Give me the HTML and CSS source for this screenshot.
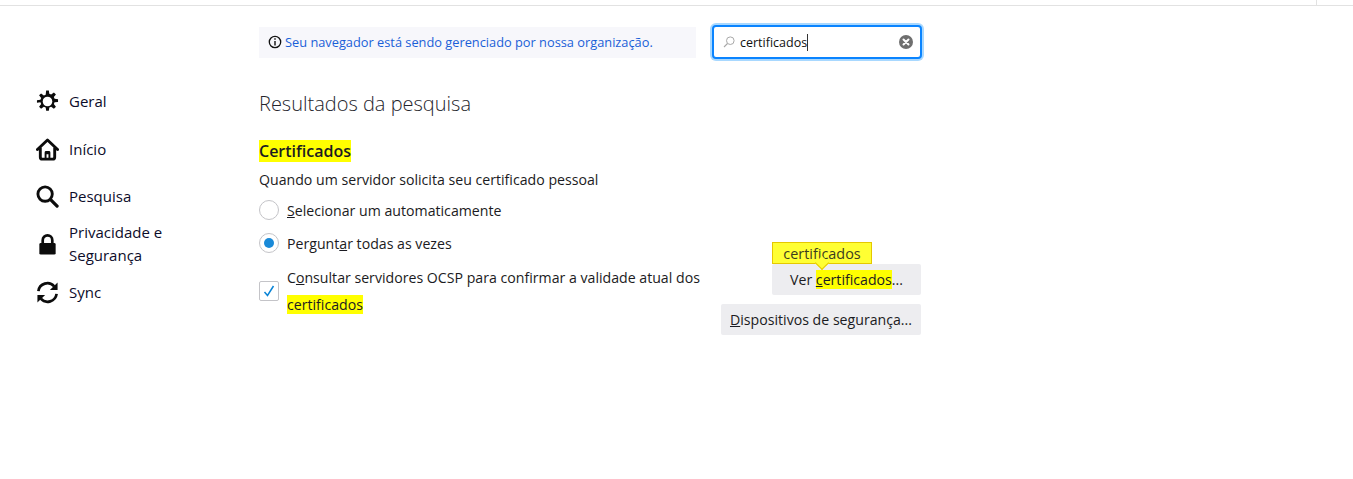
FILE: index.html
```html
<!DOCTYPE html>
<html lang="pt-BR">
<head>
<meta charset="utf-8">
<title>Opções</title>
<link rel="stylesheet" href="styles.css">
</head>
<body>
<div class="topstrip"><span class="strip-tick"></span></div>
<div class="page">
  <nav class="sidebar">
    <a class="nav-item nav-geral">
      <svg class="nav-icon" viewBox="0 0 24 24"><path fill="#0c0c0c" d="M10.6 0h2.8l.5 3.6 1.9.8L18.700 2.200l2.100 2.100-2.200 2.900.8 1.900 3.600.5v2.800l-3.600.5-.8 1.900 2.200 2.900-2.100 2.100-2.900-2.200-1.900.8-.5 3.600h-2.800l-.5-3.600-1.900-.8-2.900 2.200-2.100-2.100 2.200-2.900-.8-1.900L1 13.400v-2.800l3.600-.5.800-1.900-2.200-2.900 2.100-2.100 2.900 2.200 1.900-.8z" transform="translate(0 0.500) scale(1 .96)"/><circle cx="12" cy="12" r="5" fill="#fff"/></svg>
      <span>Geral</span>
    </a>
    <a class="nav-item nav-inicio">
      <svg class="nav-icon" viewBox="0 0 24 24"><path fill="none" stroke="#0c0c0c" stroke-width="3" stroke-linecap="round" stroke-linejoin="round" d="M1.500 12 12 2l10.500 10M4.500 10.500V20a2 2 0 0 0 2 2h11a2 2 0 0 0 2-2v-9.500"/><path fill="#0c0c0c" d="M9 22v-7a1.500 1.500 0 0 1 1.500-1.500h3A1.500 1.500 0 0 1 15 15v7h-2v-5h-2v5z"/></svg>
      <span>Início</span>
    </a>
    <a class="nav-item nav-pesquisa">
      <svg class="nav-icon" viewBox="0 0 24 24"><circle cx="9.500" cy="9.500" r="7.500" fill="none" stroke="#0c0c0c" stroke-width="3"/><path stroke="#0c0c0c" stroke-width="3.400" stroke-linecap="round" d="m15.500 15.500 6.500 6.500"/></svg>
      <span>Pesquisa</span>
    </a>
    <a class="nav-item nav-privacidade">
      <svg class="nav-icon" viewBox="0 0 24 24"><path fill="none" stroke="#0c0c0c" stroke-width="2.800" d="M7 12V7.500a5 5 0 0 1 10 0V12"/><rect x="3.500" y="10.500" width="17" height="12" rx="1.500" fill="#0c0c0c"/></svg>
      <span>Privacidade e<br>Segurança</span>
    </a>
    <a class="nav-item nav-sync">
      <svg class="nav-icon" viewBox="0 0 24 24"><path fill="none" stroke="#0c0c0c" stroke-width="2.800" d="M2.500 10.500A9.500 9.500 0 0 1 19 5.500M21.500 13.500A9.500 9.500 0 0 1 5 18.500"/><path fill="#0c0c0c" d="M22.500 1.500v8h-8zM1.500 22.500v-8h8z"/></svg>
      <span>Sync</span>
    </a>
  </nav>
  <main class="content">
    <div class="top-row">
      <div class="policy">
        <svg class="policy-icon" viewBox="0 0 14 14"><circle cx="7" cy="7" r="5.700" fill="none" stroke="#111" stroke-width="1.300"/><path fill="#111" d="M6.300 6h1.400v4.500H6.300zM6.300 3.300h1.400v1.500H6.300z"/></svg>
        <a class="policy-link">Seu navegador está sendo gerenciado por nossa organização.</a>
      </div>
      <div class="search">
        <svg class="search-icon" viewBox="0 0 12 12"><circle cx="7.300" cy="4.700" r="3.800" fill="none" stroke="#a8a8a8"/><path stroke="#a8a8a8" stroke-width="1.100" d="M4.500 7.500 1 11"/></svg>
        <span class="search-text">certificados</span><span class="caret"></span>
        <svg class="search-clear" viewBox="0 0 14 14"><circle cx="7" cy="7" r="7" fill="#6f6f6f"/><path stroke="#fff" stroke-width="2" stroke-linecap="round" d="m4.500 4.500 5 5m0-5-5 5"/></svg>
      </div>
    </div>
    <h1 class="title">Resultados da pesquisa</h1>
    <h2 class="group-title"><mark class="hl">Certificados</mark></h2>
    <p class="desc">Quando um servidor solicita seu certificado pessoal</p>
    <div class="group">
      <div class="options">
        <label class="radio-row row-auto"><span class="radio"></span><span><u>S</u>elecionar um automaticamente</span></label>
        <label class="radio-row row-ask"><span class="radio radio-on"></span><span>Pergunt<u>a</u>r todas as vezes</span></label>
        <label class="check-row"><span class="check"><svg viewBox="0 0 18 18"><path fill="none" stroke="#0a84d6" stroke-width="1.500" d="m4.500 10 3 3.500 6-9.500"/></svg></span><span class="check-text">C<u>o</u>nsultar servidores OCSP para confirmar a validade atual dos<br><mark class="hl">certificados</mark></span></label>
      </div>
      <div class="buttons">
        <div class="btn-wrap">
          <div class="tip">certificados</div>
          <button class="btn btn-ver">Ver <mark class="hl"><u>c</u>ertificados</mark>...</button>
        </div>
        <button class="btn btn-disp"><u>D</u>ispositivos de segurança...</button>
      </div>
    </div>
  </main>
</div>
</body>
</html>
```
FILE: styles.css
```css
* { box-sizing: border-box; }
html, body { margin: 0; padding: 0; }
body {
  width: 1353px;
  height: 479px;
  overflow: hidden;
  background: #fff;
  color: #1b1b22;
  font-family: "Open Sans", "Noto Sans", sans-serif;
  font-size: 14.150px;
}
.topstrip {
  height: 6px;
  border-bottom: 1px solid #e2e2e2;
  display: flex;
  justify-content: flex-end;
  padding-right: 36px;
}
.strip-tick { width: 1px; height: 5px; background: #e2e2e2; }
.page {
  display: flex;
}
.sidebar {
  width: 259px;
  flex: none;
  padding: 78px 0 0 36px;
  display: flex;
  flex-direction: column;
}
.nav-item {
  display: flex;
  align-items: center;
  gap: 10px;
  color: #0c0c2a;
  font-size: 15px;
  line-height: 23px;
}
.nav-icon { width: 23px; height: 23px; flex: none; }
.nav-geral { height: 34px; }
.nav-inicio { height: 34px; margin-top: 14px; }
.nav-pesquisa { height: 34px; margin-top: 13px; }
.nav-privacidade { height: 46px; margin-top: 8px; }
.nav-sync { height: 34px; margin-top: 8px; }
.content {
  width: 663px;
  flex: none;
}
.top-row {
  display: flex;
  align-items: center;
  gap: 16px;
  padding-top: 19px;
}
.policy {
  width: 437px;
  height: 31px;
  display: flex;
  align-items: center;
  gap: 3px;
  padding-left: 9px;
  background: #f7f7fb;
}
.policy-icon { width: 14px; height: 14px; flex: none; }
.policy-link { color: #1a5fd8; font-size: 12.800px; white-space: nowrap; }
.search {
  width: 210px;
  height: 34px;
  display: flex;
  align-items: center;
  padding: 0 7px 0 9px;
  border: 2px solid #0a84ff;
  border-radius: 4px;
  box-shadow: 0 0 0 2px #a8d8ff;
  background: #fff;
}
.search-icon { width: 12px; height: 12px; flex: none; margin-right: 5px; }
.search-text { font-size: 12.500px; color: #111; }
.caret { width: 1px; height: 17px; background: #333; }
.search-clear { width: 14px; height: 14px; margin-left: auto; }
.title {
  margin: 31px 0 0;
  font-size: 20px;
  font-weight: 300;
  line-height: 28px;
  color: #25252c;
}
.group-title {
  margin: 21px 0 0;
  font-size: 16px;
  font-weight: 600;
  line-height: 24px;
}
.hl { background: #ffff00; color: inherit; }
.desc { margin: 7px 0 0; line-height: 20px; }
.group {
  display: flex;
  justify-content: space-between;
  align-items: flex-end;
}
.options { width: 445px; flex: none; }
.radio-row, .check-row { display: flex; align-items: center; }
.radio-row { height: 22px; gap: 8px; }
.row-auto { margin-top: 9px; }
.row-ask { margin-top: 11px; }
.radio {
  width: 20px;
  height: 20px;
  border-radius: 50%;
  border: 1px solid #c4c4c8;
  background: #fff;
  flex: none;
  display: flex;
  align-items: center;
  justify-content: center;
}
.radio-on::after {
  content: "";
  width: 10px;
  height: 10px;
  border-radius: 50%;
  background: #1a8ad8;
}
.check-row { gap: 8px; margin-top: 10px; }
.check {
  width: 20px;
  height: 20px;
  border: 1px solid #c4c4c8;
  border-radius: 2px;
  flex: none;
  display: flex;
}
.check svg { width: 18px; height: 18px; }
.check-text { line-height: 27px; }
.buttons {
  display: flex;
  flex-direction: column;
  align-items: flex-end;
  gap: 9px;
  margin-bottom: -17px;
  margin-right: 1px;
}
.btn-wrap { position: relative; }
.btn {
  display: block;
  height: 31px;
  border: 0;
  border-radius: 2px;
  background: #ededf0;
  color: #1b1b22;
  font: inherit;
  padding: 0;
  white-space: nowrap;
}
.btn-ver { width: 149px; }
.btn-disp { width: 200px; }
.tip {
  position: absolute;
  left: 0;
  top: -22px;
  width: 100px;
  height: 22px;
  border: 1px solid #e5c800;
  background: #ffff33;
  text-align: center;
  line-height: 22px;
  color: #3c3c20;
  font-size: 14.400px;
}
.tip::after {
  content: "";
  position: absolute;
  left: 44px;
  bottom: -5px;
  width: 9px;
  height: 9px;
  background: #ffff33;
  border-right: 1px solid #e5c800;
  border-bottom: 1px solid #e5c800;
  transform: rotate(45deg);
}
```
